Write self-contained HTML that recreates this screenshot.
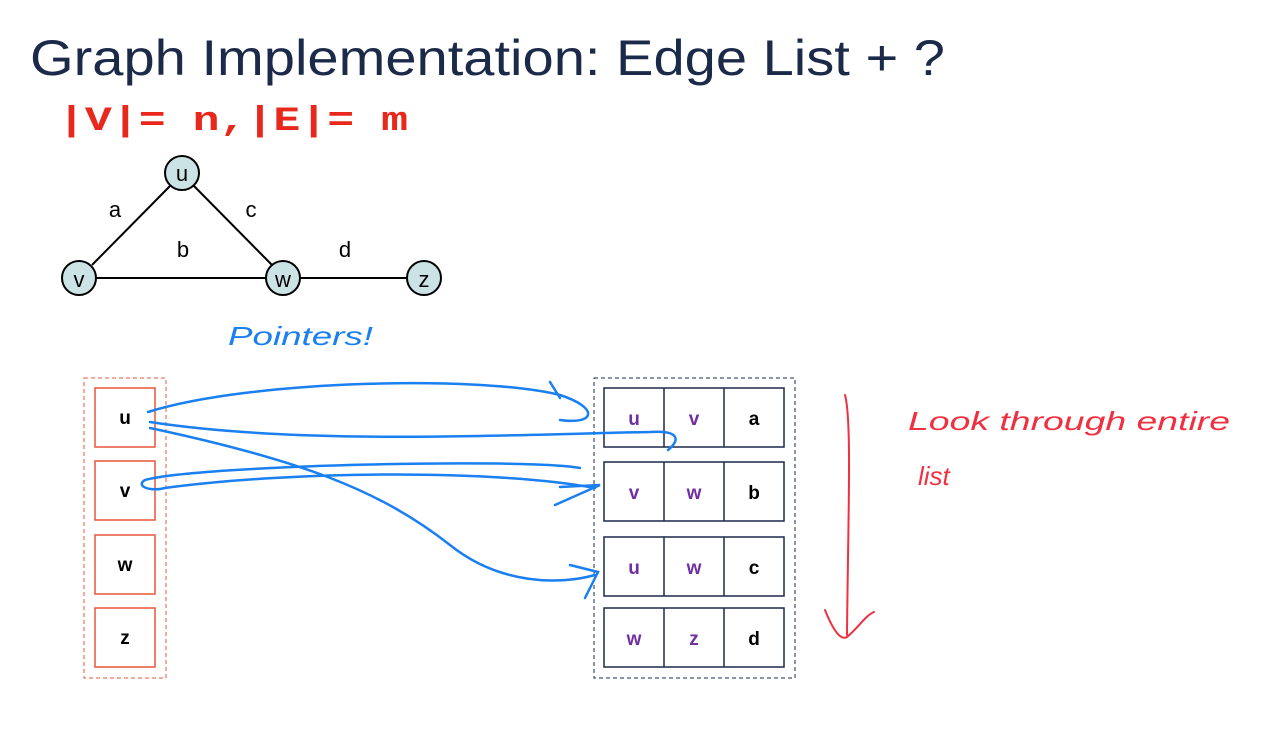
<!DOCTYPE html><html><head><style>body{margin:0;background:#fff;width:1277px;height:730px;overflow:hidden}</style></head><body>
<svg width="1277" height="730" xmlns="http://www.w3.org/2000/svg" font-family="Liberation Sans, sans-serif">
<text x="30" y="75" font-size="50" fill="#1c2a4a" textLength="915" lengthAdjust="spacingAndGlyphs">Graph Implementation: Edge List + ?</text>
<text x="58" y="130" font-size="34" font-weight="bold" fill="#e8281c" font-family="Liberation Mono, monospace" textLength="350" lengthAdjust="spacingAndGlyphs">|V|= n,|E|= m</text>
<g stroke="#000" stroke-width="2"><line x1="170" y1="186" x2="92" y2="265"/><line x1="194" y1="186" x2="272" y2="265"/><line x1="96" y1="278" x2="266" y2="278"/><line x1="300" y1="278" x2="407" y2="278"/></g>
<g fill="#cce3e6" stroke="#000" stroke-width="2"><circle cx="182" cy="173" r="17"/><circle cx="79" cy="278" r="17"/><circle cx="283" cy="278" r="17"/><circle cx="424" cy="278" r="17"/></g>
<g font-size="22" text-anchor="middle" fill="#000"><text x="182" y="181">u</text><text x="79" y="287">v</text><text x="283" y="287">w</text><text x="424" y="287">z</text><text x="115" y="217">a</text><text x="251" y="217">c</text><text x="183" y="257">b</text><text x="345" y="257">d</text></g>
<text x="228" y="345" font-size="26" fill="#1a7ff0" font-style="italic" textLength="145" lengthAdjust="spacingAndGlyphs">Pointers!</text>
<rect x="84" y="378" width="82" height="300" fill="none" stroke="#e8553a" stroke-dasharray="4 3"/>
<g fill="none" stroke="#e8553a" stroke-width="1.5"><rect x="95" y="388" width="60" height="59"/><rect x="95" y="461" width="60" height="59"/><rect x="95" y="535" width="60" height="59"/><rect x="95" y="608" width="60" height="59"/></g>
<g font-size="19" font-weight="bold" text-anchor="middle"><text x="125" y="424">u</text><text x="125" y="497">v</text><text x="125" y="571">w</text><text x="125" y="644">z</text></g>
<rect x="594" y="378" width="201" height="300" fill="none" stroke="#1c2a4a" stroke-dasharray="4 3"/>
<g fill="none" stroke="#1c2a4a" stroke-width="1.5">
<rect x="604" y="388" width="180" height="59"/><line x1="664" y1="388" x2="664" y2="447"/><line x1="724" y1="388" x2="724" y2="447"/>
<rect x="604" y="462" width="180" height="59"/><line x1="664" y1="462" x2="664" y2="521"/><line x1="724" y1="462" x2="724" y2="521"/>
<rect x="604" y="537" width="180" height="59"/><line x1="664" y1="537" x2="664" y2="596"/><line x1="724" y1="537" x2="724" y2="596"/>
<rect x="604" y="608" width="180" height="59"/><line x1="664" y1="608" x2="664" y2="667"/><line x1="724" y1="608" x2="724" y2="667"/></g>
<g font-size="19" font-weight="bold" text-anchor="middle" fill="#7030a0">
<text x="634" y="425">u</text><text x="694" y="425">v</text><text x="754" y="425" fill="#000">a</text>
<text x="634" y="499">v</text><text x="694" y="499">w</text><text x="754" y="499" fill="#000">b</text>
<text x="634" y="574">u</text><text x="694" y="574">w</text><text x="754" y="574" fill="#000">c</text>
<text x="634" y="645">w</text><text x="694" y="645">z</text><text x="754" y="645" fill="#000">d</text></g>
<g fill="none" stroke="#1a7ff0" stroke-width="2.5" stroke-linecap="round">
<path d="M148 412 C250 380 480 375 560 395 C600 408 595 425 560 420"/><path d="M550 382 L560 398"/>
<path d="M150 422 C300 445 500 435 650 432 C680 430 680 440 668 450"/>
<path d="M150 428 C300 460 380 490 450 545 C500 585 560 585 595 575"/><path d="M570 565 L598 572 L585 598"/>
<path d="M580 468 C530 458 200 465 145 480 C135 486 150 492 165 488 C300 470 500 470 595 488"/><path d="M560 487 L600 485 L555 505"/>
</g>
<g fill="none" stroke="#f03040" stroke-width="2" stroke-linecap="round">
<path d="M845 395 C852 420 848 520 847 635"/><path d="M825 610 C835 635 842 640 847 637 C858 628 866 615 874 612"/></g>
<text x="908" y="430" font-size="26" fill="#f03040" font-style="italic" textLength="322" lengthAdjust="spacingAndGlyphs">Look  through  entire</text>
<text x="918" y="485" font-size="26" fill="#f03040" font-style="italic">list</text>
</svg></body></html>
